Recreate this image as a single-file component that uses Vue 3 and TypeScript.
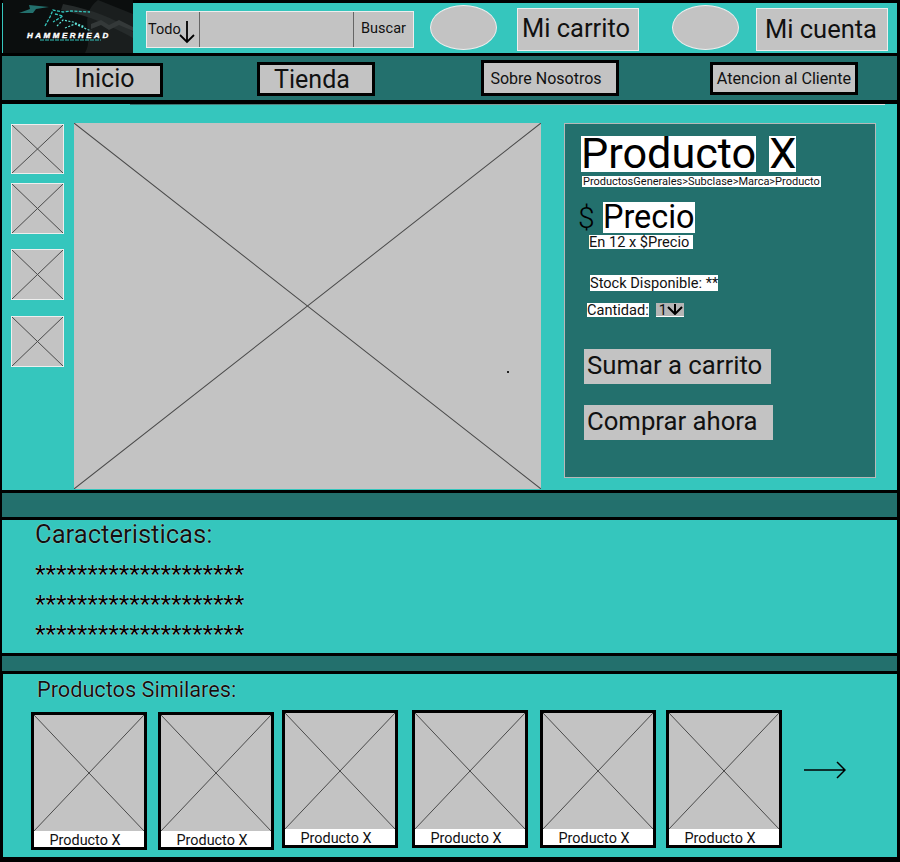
<script setup lang="ts">
const thumbs: string[] = ['t1', 't2', 't3', 't4']
const cards: string[] = ['c1', 'c2', 'c3', 'c4', 'c5', 'c6']
const stars = '*'.repeat(20)
const rows: number[] = [1, 2, 3]
</script>

<template>
  <div class="page">
    <header class="top">
      <div class="logo">
        <svg class="logo-art" width="130" height="53" viewBox="0 0 130 53">
          <path d="M95 0 L130 14 L130 53 L82 53 C92 36 74 16 95 0Z" fill="#1a1e1e" />
          <path d="M60 4 C90 10 112 18 130 32 L130 38 C108 26 88 16 58 10Z" fill="#262b2b" />
          <path d="M88 24 L98 20 L106 25 L116 20 L130 27 L130 31 L116 25 L106 30 L98 25 L88 29Z" fill="#343939" />
          <path d="M16 13 L27 9 L26 5 L46 7 L33 9 L30 13Z" fill="#23706d" />
          <path d="M42 26 L47 17 L50 10 L60 12 L68 11 L87 12 M52 14 L60 16 L50 22" fill="none" stroke="#35c6bd" stroke-width="1.3" stroke-dasharray="3 1.4" />
          <path d="M54 26 L60 20 L70 22 L82 27 M62 28 L72 24 L88 31" fill="none" stroke="#5fe0d6" stroke-width="1.2" stroke-dasharray="2 1.5" />
          <path d="M37 40 L98 40" stroke="#35c6bd" stroke-width="1" stroke-dasharray="4 1" />
        </svg>
        <span class="logo-name">HAMMERHEAD</span>
      </div>
      <div class="search">
        <div class="search-all">
          <span>Todo</span>
          <svg class="down" width="18" height="24" viewBox="0 0 18 24">
            <path d="M9 1 V22 M2 15 L9 22 L16 15" fill="none" stroke="#000" stroke-width="1.8" />
          </svg>
        </div>
        <div class="search-input"></div>
        <div class="search-go">Buscar</div>
      </div>
      <div class="oval oval-a"></div>
      <div class="head-btn btn-cart">Mi carrito</div>
      <div class="oval oval-b"></div>
      <div class="head-btn btn-account">Mi cuenta</div>
    </header>

    <nav class="nav">
      <a class="nav-item nav-home">Inicio</a>
      <a class="nav-item nav-shop">Tienda</a>
      <a class="nav-item nav-about">Sobre Nosotros</a>
      <a class="nav-item nav-help">Atencion al Cliente</a>
    </nav>

    <main class="main">
      <div class="thumbs">
        <div v-for="t in thumbs" :key="t" class="ph thumb" :class="t">
          <svg class="cross" viewBox="0 0 100 100" preserveAspectRatio="none">
            <path d="M0 0 L100 100 M100 0 L0 100" vector-effect="non-scaling-stroke" />
          </svg>
        </div>
      </div>
      <div class="ph hero">
        <svg class="cross" viewBox="0 0 100 100" preserveAspectRatio="none">
          <path d="M0 0 L100 100 M100 0 L0 100" vector-effect="non-scaling-stroke" />
        </svg>
        <i class="speck"></i>
      </div>
      <section class="panel">
        <h1 class="title"><span>Producto</span><span class="title-x">X</span></h1>
        <div class="crumbs"><span>ProductosGenerales&gt;Subclase&gt;Marca&gt;Producto</span></div>
        <div class="price"><b>$</b><span>Precio</span></div>
        <div class="fees"><span>En 12 x $Precio&nbsp;</span></div>
        <div class="stock"><span>Stock Disponible: **</span></div>
        <div class="qty">
          <span class="qty-label">Cantidad:</span>
          <span class="qty-select">1<svg width="16" height="12" viewBox="0 0 16 12"><path d="M8 1 V11 M1 4 L8 11 L15 4" fill="none" stroke="#000" stroke-width="2" /></svg></span>
        </div>
        <div class="cta cta-add">Sumar a carrito</div>
        <div class="cta cta-buy">Comprar ahora</div>
      </section>
    </main>

    <div class="band band-a"></div>

    <section class="specs">
      <h2>Caracteristicas:</h2>
      <p v-for="r in rows" :key="r">{{ stars }}</p>
    </section>

    <div class="band band-b"></div>

    <section class="similar">
      <h2>Productos Similares:</h2>
      <div class="cards">
        <article v-for="c in cards" :key="c" class="card" :class="c">
          <div class="ph card-img">
            <svg class="cross" viewBox="0 0 100 100" preserveAspectRatio="none">
              <path d="M0 0 L100 100 M100 0 L0 100" vector-effect="non-scaling-stroke" />
            </svg>
          </div>
          <div class="card-name">Producto X</div>
        </article>
        <svg class="next" width="42" height="18" viewBox="0 0 42 18">
          <path d="M0 9 H40 M33 1 L41 9 L33 17" fill="none" stroke="#000" stroke-width="1.5" />
        </svg>
      </div>
    </section>
  </div>
</template>

<style>
html, body { margin: 0; background: #000; }
</style>

<style scoped>
.page {
  width: 900px;
  height: 862px;
  box-sizing: border-box;
  padding: 3px 3px 0 2px;
  background: #000;
  display: flex;
  flex-direction: column;
  font-family: Roboto, "Liberation Sans", sans-serif;
  color: #111;
  overflow: hidden;
}
.top {
  height: 50px;
  flex: none;
  background: #35c6bd;
  display: flex;
  align-items: flex-start;
  position: relative;
}
.logo {
  width: 130px;
  height: 53px;
  margin: -3px 0 0 1px;
  background: #0b0e0e;
  position: relative;
  flex: none;
  overflow: hidden;
}
.logo-art { display: block; }
.logo-name {
  position: absolute;
  left: 24px;
  top: 31px;
  color: #fff;
  font: italic bold 8px/9px "Liberation Sans", sans-serif;
  letter-spacing: 2.5px;
  -webkit-text-stroke: 0.4px #fff;
  white-space: nowrap;
}
.search {
  margin: 8px 0 0 13px;
  width: 268px;
  height: 37px;
  box-sizing: border-box;
  border: 1px solid #eee;
  background: #c3c3c3;
  display: flex;
  font-size: 14.5px;
  flex: none;
}
.search-all {
  width: 53px;
  box-sizing: border-box;
  border-right: 1px solid #666;
  display: flex;
  align-items: center;
  padding-left: 1px;
  position: relative;
}
.down { position: absolute; left: 31px; top: 8px; }
.search-input { width: 153px; border-right: 1px solid #666; }
.search-go { flex: 1; text-align: center; line-height: 33px; }
.oval {
  width: 67px;
  height: 45px;
  margin-top: 2px;
  box-sizing: border-box;
  border: 1px solid #eee;
  border-radius: 50%;
  background: #c3c3c3;
  flex: none;
}
.oval-a { margin-left: 16px; }
.oval-b { margin-left: 33px; }
.head-btn {
  height: 43px;
  margin-top: 5px;
  box-sizing: border-box;
  border: 1px solid #eee;
  background: #c3c3c3;
  font-size: 25.5px;
  line-height: 39px;
  text-align: center;
  white-space: nowrap;
  flex: none;
}
.btn-cart { width: 122px; margin-left: 20px; padding-right: 4px; }
.btn-account { width: 132px; margin-left: 17px; line-height: 41px; padding-right: 2px; }

.nav {
  height: 44px;
  flex: none;
  margin-top: 3px;
  background: #23706d;
  display: flex;
  align-items: flex-start;
}
.nav-item {
  box-sizing: border-box;
  border: 3px solid #000;
  background: #c3c3c3;
  text-align: center;
  white-space: nowrap;
  flex: none;
}
.nav-home { width: 117px; height: 34px; margin: 7px 0 0 44px; font-size: 25px; line-height: 25px; }
.nav-shop { width: 118px; height: 34px; margin: 6px 0 0 94px; font-size: 25px; line-height: 29px; padding-right: 8px; }
.nav-about { width: 138px; height: 36px; margin: 4px 0 0 106px; font-size: 16px; line-height: 31px; padding-right: 8px; }
.nav-help { width: 148px; height: 33px; margin: 6px 0 0 91px; font-size: 16.2px; line-height: 28px; }

.main {
  height: 386px;
  flex: none;
  margin-top: 4px;
  background: #35c6bd;
  display: flex;
  align-items: flex-start;
  position: relative;
}
.main::before {
  content: "";
  position: absolute;
  top: 0;
  left: 128px;
  right: 12px;
  height: 1px;
  background: linear-gradient(90deg, #35706d, #8a9a98 50%, #e4e4e4);
}
.ph { position: relative; background: #c3c3c3; }
.cross {
  position: absolute;
  inset: 0;
  width: 100%;
  height: 100%;
  display: block;
}
.cross path { stroke: #4a4a4a; stroke-width: 1; fill: none; }
.thumbs {
  width: 53px;
  margin: 20px 0 0 9px;
  display: flex;
  flex-direction: column;
  flex: none;
}
.thumb { height: 50px; box-sizing: border-box; border: 1px solid #eee; }
.t2 { margin-top: 9px; height: 51px; }
.t3 { margin-top: 15px; height: 51px; }
.t4 { margin-top: 16px; height: 51px; }
.hero {
  width: 467px;
  height: 366px;
  margin: 19px 0 0 10px;
  flex: none;
}
.speck {
  position: absolute;
  left: 433px;
  top: 248px;
  width: 2px;
  height: 2px;
  background: #222;
}
.panel {
  width: 312px;
  height: 355px;
  margin: 19px 0 0 23px;
  box-sizing: border-box;
  border: 1px solid #b8b8b8;
  background: #23706d;
  padding: 12px 0 0 16px;
  flex: none;
}
.panel span { background: #fff; display: inline-block; vertical-align: top; }
.title {
  margin: 0;
  font-size: 43.2px;
  font-weight: 400;
  line-height: 36px;
  height: 36px;
  color: #000;
  white-space: nowrap;
}
.title-x { margin-left: 13px; }
.crumbs {
  margin: 4px 0 0 1px;
  height: 11px;
  font-size: 11px;
  line-height: 11px;
  color: #111;
  white-space: nowrap;
}
.crumbs span { padding: 0 1px; }
.price {
  margin: 15px 0 0 -3px;
  height: 31px;
  font-size: 32.4px;
  line-height: 31px;
  color: #000;
  display: flex;
}
.price b { font-weight: 300; width: 25px; font-size: 30px; }
.fees {
  margin: 2px 0 0 8px;
  height: 14px;
  font-size: 14.6px;
  line-height: 14px;
}
.stock {
  margin: 26px 0 0 9px;
  height: 16px;
  font-size: 14.6px;
  line-height: 16px;
}
.qty {
  margin: 12px 0 0 6px;
  height: 14px;
  display: flex;
  font-size: 14.6px;
  line-height: 14px;
}
.panel .qty-select {
  margin-left: 7px;
  width: 28px;
  height: 14px;
  box-sizing: border-box;
  background: #b5b5b5;
  border-bottom: 1px solid #fff;
  display: flex;
  padding-left: 3px;
}
.cta {
  background: #c3c3c3;
  height: 35px;
  margin-left: 3px;
  padding-left: 3px;
  box-sizing: border-box;
  font-size: 25.7px;
  line-height: 32px;
  white-space: nowrap;
}
.cta-add { width: 187px; margin-top: 32px; }
.cta-buy { width: 189px; margin-top: 21px; }

.band { background: #23706d; flex: none; margin-top: 3px; }
.band-a { height: 24px; }
.band-b { height: 15px; }

.specs {
  height: 133px;
  flex: none;
  margin-top: 3px;
  background: #35c6bd;
  padding: 1px 0 0 33px;
  box-sizing: border-box;
}
.specs h2 {
  margin: 0 0 14px;
  font-size: 25.6px;
  font-weight: 400;
  line-height: 27px;
  text-shadow: 0 0 1px #fff;
}
.specs p {
  margin: 0 0 7px;
  font-size: 24.3px;
  line-height: 23px;
  color: #000;
  text-shadow: 0 0 1px #fff;
}
.similar {
  height: 183px;
  flex: none;
  margin: 3px 0 0 1px;
  background: #35c6bd;
  padding: 4px 0 0 28px;
  box-sizing: border-box;
}
.similar h2 {
  margin: 0 0 0 6px;
  height: 32px;
  font-size: 21.7px;
  font-weight: 400;
  line-height: 24px;
  text-shadow: 0 0 1px #fff;
}
.cards { display: flex; align-items: flex-start; }
.card {
  width: 116px;
  height: 138px;
  box-sizing: border-box;
  border: 3px solid #000;
  background: #fff;
  flex: none;
  display: flex;
  flex-direction: column;
  margin-top: 2px;
}
.c1 { margin-top: 2px; }
.c2 { margin: 2px 0 0 11px; }
.c3 { margin: 0 0 0 8px; }
.c4 { margin: 0 0 0 14px; }
.c5 { margin: 0 0 0 12px; }
.c6 { margin: 0 0 0 10px; }
.card-img { height: 116px; flex: none; }
.card-name {
  flex: 1;
  text-align: center;
  font-size: 14.4px;
  line-height: 17px;
  padding-top: 1px;
  height: 13px;
  overflow: visible;
  padding-right: 8px;
}
.next { margin: 51px 0 0 22px; flex: none; }
</style>
